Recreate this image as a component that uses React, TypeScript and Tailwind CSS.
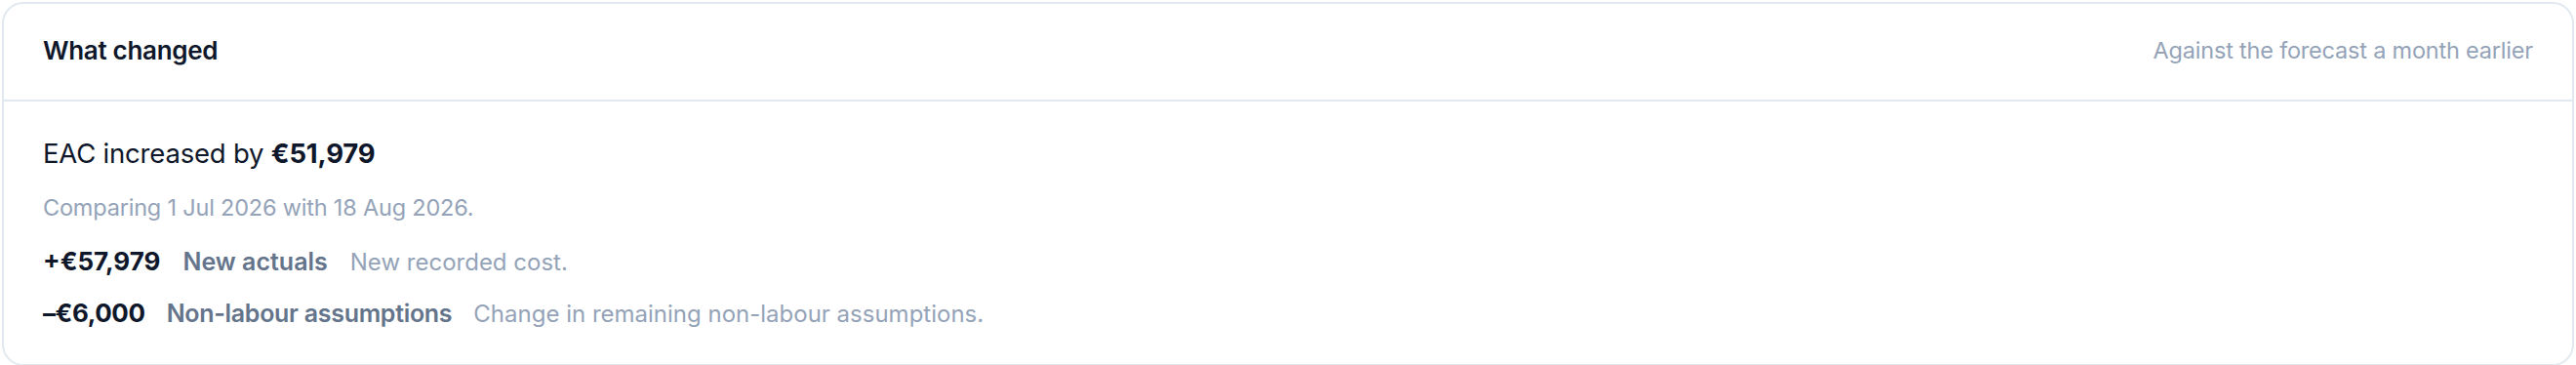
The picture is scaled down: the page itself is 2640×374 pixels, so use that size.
export default function App() {
  return (
    <div className="p-[2px] bg-white" style={{ fontFamily: "Inter, 'Noto Sans', sans-serif" }}>
      <div className="rounded-[22px] border-2 border-[#e2e8f0] bg-white">
        {/* Header */}
        <div className="flex items-center justify-between border-b-2 border-[#e2e8f0] px-[40px] pb-[3px] h-[100px]">
          <h2 className="text-[26px] font-semibold text-[#0f172a] tracking-[-0.3px]">What changed</h2>
          <span className="text-[23.5px] text-[#94a3b8] tracking-[-0.2px]">Against the forecast a month earlier</span>
        </div>

        {/* Body */}
        <div className="px-[40px] pt-[33px] pb-[31px]">
          <p className="text-[27.5px] leading-[40px] text-[#0f172a] tracking-[-0.2px]">
            EAC increased by <span className="font-bold">€51,979</span>
          </p>
          <p className="mt-[16px] text-[23.5px] leading-[40px] text-[#94a3b8] tracking-[-0.2px]">
            Comparing 1 Jul 2026 with 18 Aug 2026.
          </p>
          <div className="mt-[15px] flex flex-col gap-[12px]">
            <div className="flex items-baseline gap-[23px] leading-[40px]">
              <span className="text-[26px] font-bold text-[#0f172a]">+€57,979</span>
              <span className="text-[25px] font-semibold text-[#64748b]">New actuals</span>
              <span className="text-[24px] text-[#94a3b8]">New recorded cost.</span>
            </div>
            <div className="flex items-baseline gap-[22px] leading-[40px]">
              <span className="text-[26px] font-bold text-[#0f172a] tracking-[-0.4px]">–€6,000</span>
              <span className="text-[25px] font-semibold text-[#64748b] tracking-[-0.3px]">Non-labour assumptions</span>
              <span className="text-[24px] text-[#94a3b8]">Change in remaining non-labour assumptions.</span>
            </div>
          </div>
        </div>
      </div>
    </div>
  );
}
